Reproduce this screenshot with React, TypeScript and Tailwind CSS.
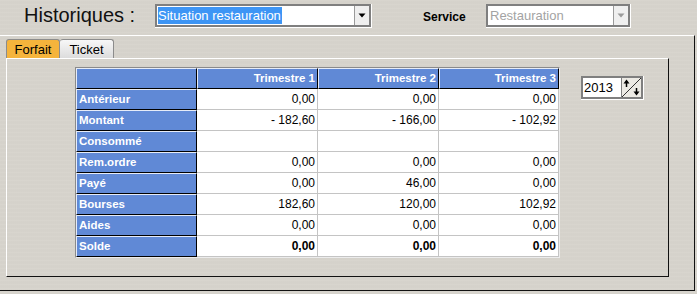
import React from "react";

const rows: [string, string, string, string][] = [
  ["Antérieur", "0,00", "0,00", "0,00"],
  ["Montant", "- 182,60", "- 166,00", "- 102,92"],
  ["Consommé", "", "", ""],
  ["Rem.ordre", "0,00", "0,00", "0,00"],
  ["Payé", "0,00", "46,00", "0,00"],
  ["Bourses", "182,60", "120,00", "102,92"],
  ["Aides", "0,00", "0,00", "0,00"],
  ["Solde", "0,00", "0,00", "0,00"],
];

function Arrow({ color }: { color: string }) {
  return (
    <svg width="8" height="5" viewBox="0 0 8 5">
      <polygon points="0.5,0.5 7.5,0.5 4,4.5" fill={color} />
    </svg>
  );
}

function Combo({
  text,
  width,
  disabled,
}: {
  text: string;
  width: string;
  disabled?: boolean;
}) {
  return (
    <div className={`${width} h-[24px] mt-[4px] border-r border-b border-white`}>
      <div className="w-full h-full border-2 border-[#7f7f7f] bg-white flex">
        <div className="flex-1 flex items-center pl-[1px] overflow-hidden">
          {disabled ? (
            <span className="text-[13px] leading-[16px] text-[#a3a3a3] pl-[1px]">{text}</span>
          ) : (
            <span className="text-[13px] leading-[17px] text-white bg-[#3d95f5] pr-[1px]">
              {text}
            </span>
          )}
        </div>
        <div className="w-[15px] h-full border-l border-[#9a9a9a] bg-[#efefef] flex items-center justify-center">
          <Arrow color={disabled ? "#9a9a9a" : "#000"} />
        </div>
      </div>
    </div>
  );
}

export default function App() {
  const labelCell =
    "h-[21px] bg-[#6089d6] border-t border-l border-t-[#e6ecf8] border-l-[#e6ecf8] border-b border-r border-b-black border-r-black text-white font-bold text-[11.5px] flex items-center";
  return (
    <div
      className="w-[697px] h-[294px] overflow-hidden bg-[#d6d3cc] bg-[repeating-linear-gradient(180deg,#d8d5ce_0px,#d8d5ce_1px,#d3d0c9_2px,#d7d4cd_3px,#d4d1ca_4px)] text-black"
      style={{ fontFamily: '"Liberation Sans", Arial, sans-serif' }}
    >
      {/* top bar */}
      <div className="h-[35px] flex items-start">
        <div className="w-[155px] pl-[24px] pt-[4px] text-[20px] leading-[23px] text-[#111]">
          Historiques :
        </div>
        <Combo text="Situation restauration" width="w-[217px]" />
        <div className="w-[114px] pl-[51px] pt-[10px] text-[12px] leading-[14px] font-bold">
          Service
        </div>
        <Combo text="Restauration" width="w-[145px]" disabled />
      </div>

      {/* outer frame */}
      <div className="w-[695px] h-[256px] border-t border-t-white border-r border-r-[#111] border-b border-b-[#111] pl-[6px] pt-[3px]">
        {/* tabs */}
        <div className="flex h-[19px]">
          <div className="w-[54px] h-full bg-[#f5b43c] border-t border-l border-r border-[#8c8c8c] rounded-t-[3px] text-[13px] leading-[17px] flex items-end justify-center">
            Forfait
          </div>
          <div className="w-[54px] h-full bg-[linear-gradient(180deg,#f7f7f7,#dcdcdc)] border-t border-r border-[#8c8c8c] rounded-t-[3px] text-[13px] leading-[17px] flex items-end justify-center">
            Ticket
          </div>
        </div>

        {/* panel */}
        <div className="w-[663px] h-[219px] border-t border-t-white border-l border-l-white border-r border-r-[#111] border-b border-b-[#111] pl-[68px] pt-[8px] flex items-start">
          {/* grid */}
          <div className="border-t border-l border-t-[#8a8a8a] border-l-[#8a8a8a] border-b border-r border-b-[#ececec] border-r-[#ececec]">
            <div className="grid grid-cols-[121px_121px_121px_120px]">
              <div className={labelCell}></div>
              {["Trimestre 1", "Trimestre 2", "Trimestre 3"].map((t) => (
                <div key={t} className={`${labelCell} justify-end pr-[2px]`}>
                  {t}
                </div>
              ))}
              {rows.map((r) => (
                <React.Fragment key={r[0]}>
                  <div className={`${labelCell} pl-[2px]`}>{r[0]}</div>
                  {r.slice(1).map((v, i) => (
                    <div
                      key={i}
                      className={`h-[21px] bg-white border-r border-b border-[#c4c4c4] flex items-center justify-end pr-[2px] text-[12px] ${
                        r[0] === "Solde" ? "font-bold" : ""
                      }`}
                    >
                      {v}
                    </div>
                  ))}
                </React.Fragment>
              ))}
            </div>
          </div>

          {/* year spinner */}
          <div className="ml-[21px] mt-[9px] w-[63px] h-[24px] border-r border-b border-white">
            <div className="w-full h-full border-2 border-[#7f7f7f] bg-white flex">
              <div className="flex-1 flex items-center pl-[1px] text-[13px] leading-[16px]">2013</div>
              <div className="w-[20px] h-full border-l border-[#7f7f7f] bg-[#eceae4]">
                <svg width="19" height="19" viewBox="0 0 19 19">
                  <line x1="0" y1="19" x2="19" y2="0" stroke="#333" strokeWidth="1" />
                  <line x1="4.5" y1="3" x2="4.5" y2="9" stroke="#000" strokeWidth="1.5" />
                  <polygon points="1.5,5.5 4.5,1.5 7.5,5.5" fill="#000" />
                  <line x1="14.5" y1="10" x2="14.5" y2="16" stroke="#000" strokeWidth="1.5" />
                  <polygon points="11.5,13.5 14.5,17.5 17.5,13.5" fill="#000" />
                </svg>
              </div>
            </div>
          </div>
        </div>
      </div>
    </div>
  );
}
